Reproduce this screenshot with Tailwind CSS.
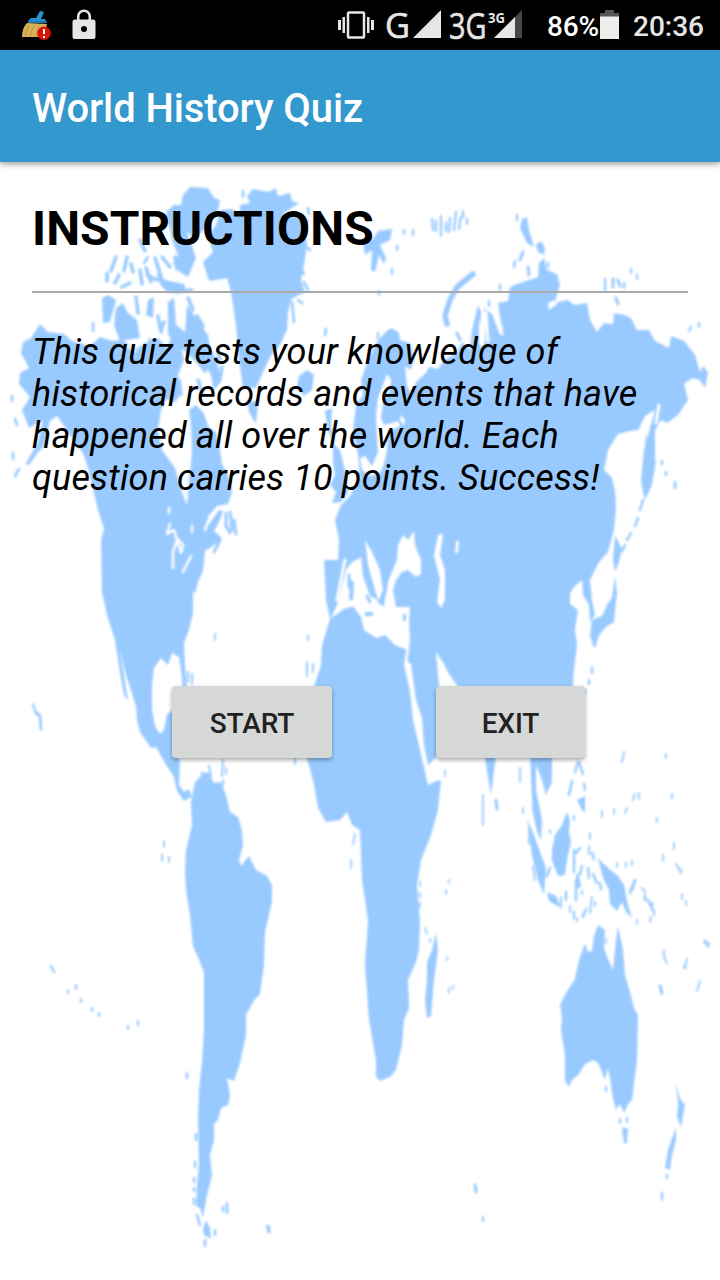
<!DOCTYPE html>
<html lang="en">
<head>
<meta charset="utf-8">
<title>World History Quiz</title>
<script src="https://cdn.jsdelivr.net/npm/@tailwindcss/browser@4"></script>
</head>
<body class="bg-white">
<div class="relative isolate flex h-[1280px] w-[720px] flex-col overflow-hidden font-['Roboto',sans-serif] text-black">
  <!-- world map backdrop -->
  <svg class="absolute inset-0 -z-10 blur-[0.9px]" width="720" height="1280" viewBox="0 0 720 1280" fill="#99caff" stroke-linecap="round" stroke-linejoin="round">
    <!-- North and Central America -->
    <path d="M40 324L48 332L64 334L72 341L90 346L100 337L112 341L122 340L136 349L145 343L158 338L167 348L172 335L180 342L184 360L178 375L180 395L175 402L166 399L161 410L158 430L162 450L175 468L183 495L187 505L189 480L192 455L191 425L189 410L196 405L203 412L209 428L216 432L220 450L222 464L228 475L232 492L228 504L217 506L211 513L206 527L212 520L219 510L223 511L219 522L214 531L222 538L213 546L205 551L203 571L198 582L195 594L193 590L193 613L189 630L184 643L185 665L187 690L183 690L181 669L179 657L172 653L168 665L161 658L154 668L152 685L152 710L155 726L160 734L164 730L167 714L173 710L176 750L180 762L179 785L184 792L189 789L192 797L189 798L184 801L177 791L174 777L165 763L156 747L151 748L140 732L137 721L136 706L126 675L119 648L124 675L128 701L124 695L119 667L115 640L107 615L102 592L101 540L104 529L98 510L92 485L88 468L83 453L76 445L67 430L57 416L50 421L44 445L33 459L25 465L38 442L43 420L29 428L22 410L30 397L19 384L20 373L29 368L21 353L23 342L31 338Z"/>
    <!-- Arctic archipelago -->
    <path d="M183 195L190 187L208 188L214 198L220 200L218 210L210 217L204 230L194 238L180 226L166 212L174 205L181 205Z"/>
    <path d="M166 210L181 217L190 240L196 258L188 277L180 272L173 263L178 255L172 240Z"/>
    <path d="M156 272L165 280L184 284L187 292L168 293L160 284Z"/>
    <path d="M102 298L108 295L116 300L110 322L103 323Z"/>
    <path d="M116 308L123 303L128 313L137 320L140 338L120 341L114 325Z"/>
    <path d="M148 300L154 297L153 318L146 315Z"/>
    <path d="M168 302L174 298L176 325L185 332L187 305L196 318L208 335L210 352L204 372L194 360L181 348L168 335Z"/>
    <path d="M200 358L212 350L218 365L221 382L214 390L211 375Z"/>
    <path d="M247 400L258 402L256 424L249 412Z"/>
    <path fill="none" stroke="#99caff" stroke-width="3.5" d="M140 240l5 11M127 257l-3 14M116 257l-5 14M107 273v8M119 275l-4 8M122 287l8-4M131 264l2 8M140 270l2 14M146 268l5 14M155 258l6 18M162 257l8 10M175 257l2 12M192 290l-16 2M136 297l2 16M158 316l3 16M188 298l5 12M197 316l6 10M205 355v16M222 367l-2 12M198 380l4 12M218 352l2 8M179 380l2 14M150 340l4 5M164 322l-3 9M147 275l10 5"/>
    <path fill="none" stroke="#99caff" stroke-width="2.6" d="M93 323v8M148 257l-4 6M12 396v5M15 419l2 6M28 464l6-8M15 476l4-7M41 448l5-14M13 453v6"/>
    <!-- Greenland -->
    <path d="M250 203L247 196L253 189L268 192L276 188L278 196L290 193L292 201L299 203L290 209L282 214L300 216L309 220L305 230L307 245L303 270L301 280L305 292L291 299L288 312L287 330L280 345L270 357L264 370L256 388L243 388L239 360L236 325L231 292L227 278L209 281L203 262L213 252L208 236L216 225L221 210L232 209L240 214L240 205Z"/>
    <path fill="none" stroke="#99caff" stroke-width="2.6" d="M243 191v6M308 208l1 6M304 245l6 5M301 268l3 6M304 282l4 8M292 302l2 20M298 300l4 3M326 329l-1 6M234 265l-27 3"/>
    <path d="M299 376L307 370L314 375L312 390L304 396L297 388Z"/>
    <path fill="none" stroke="#99caff" stroke-width="3" d="M205 540l9-12M214 552l6-12M226 525l4 8M230 512l2 18M226 513v14M234 520l2 14"/>
    <g fill="none" stroke="#fff" stroke-width="2.5">
      <path d="M170 524L167 534L174 530L177 540L173 552V568M177 540L181 553L183 545L177 538M183 572L191 556M192 526v6M169 508v5M219 507l-9 9-5 14M127 346l8 5"/>
    </g>
    <!-- Caribbean and Atlantic -->
    <path fill="none" stroke="#99caff" stroke-width="2" d="M188 672v10M192 674v10M215 634v6M202 772v18M209 766l2 10M223 760l-1 16M226 768v6M223 780v5M307 662v14M313 664v8M33 704l3 10M308 636v4M164 841v6M162 855v6M169 857v5M295 758v6"/>
    <path fill="none" stroke="#99caff" stroke-width="2.8" d="M36 712l4 4 1 13"/>
    <!-- South America -->
    <path d="M192 797L195 782L204 773L208 772L214 783L221 782L226 795L230 812L238 817L242 830L243 846L239 860L241 866L249 856L256 870L267 876L272 885L272 902L265 932L264 965L260 994L255 999L246 1015L246 1035L240 1063L234 1081L227 1078L230 1095L228 1105L221 1108L218 1120L214 1124L214 1140L210 1155L212 1175L206 1200L203 1218L200 1208L196 1206L197 1185L199 1164L198 1120L199 1090L202 1062L204 1030L204 973L200 962L193 946L190 915L186 890L185 872L186 850L192 825L191 802Z"/>
    <path d="M206 1220L210 1228L211 1239L204 1235L203 1229ZM266 1224L270 1226L271 1234L267 1232Z"/>
    <path fill="none" stroke="#99caff" stroke-width="2.5" d="M196 1134v6M195 1162v5M194 1178v4M194 1188v3M194 1199v5M197 1215l3 10M205 1240v6M215 1230v5M223 1207v4M227 1203v10M187 1073v5"/>
    <path fill="none" stroke="#8fc4ff" stroke-width="2" d="M51 966l3 6M68 990v3M76 985v4M81 999v3M92 1008v3M99 1013v3M128 1026v3M138 1021v4"/>
    <!-- Europe and Asia -->
    <path d="M368 360L378 340L388 330L392 328L399 333L400 340L410 343L414 358L410 372L407 388L416 378L422 372L430 367L438 369L444 360L457 353L462 342L470 350L472 330L478 305L481 312L480 345L484 348L486 325L484 308L492 314L500 335L503 330L500 317L498 303L508 301L510 287L520 283L538 277L539 263L544 258L547 270L557 274L560 285L555 302L549 310L558 302L568 300L574 305L587 303L590 320L597 332L604 323L613 324L614 313L625 315L631 318L637 330L649 330L655 341L669 348L671 336L684 341L695 355L700 372L703 366L708 372L705 388L700 380L692 378L684 384L688 400L678 415L667 423L661 420L655 430L655 460L650 480L644 498L641 480L644 450L655 410L645 416L638 430L630 431L618 434L608 450L604 470L612 478L617 500L614 530L608 552L599 562L590 580L592 600L595 615L590 622L589 605L583 595L582 580L575 586L570 593L570 604L578 610L575 630L577 645L574 670L572 700L555 715L552 758L552 782L546 795L542 780L536 765L536 790L542 820L541 840L536 822L532 800L530 750L520 715L505 708L496 755L491 795L486 765L478 710L466 700L456 684L449 674L444 664L436 652L440 690L447 700L438 755L426 768L423 755L412 700L407 665L410 640L409 622L393 638L383 620L380 606L366 607L362 622L352 603L345 608L330 619L326 600L324 560L338 560L339 540L335 520L341 505L350 496L360 478L358 455L353 430L356 405L363 395L361 380Z"/>
    <!-- Africa -->
    <path d="M330 619L345 608L362 605L365 625L379 638L382 630L407 645L404 665L412 700L420 745L428 782L441 780L438 810L431 835L421 860L417 885L420 920L419 950L416 962L408 980L409 1008L404 1020L402 1045L396 1070L390 1077L380 1081L376 1077L376 1060L369 1020L365 965L368 920L362 880L360 830L352 825L347 812L340 820L326 822L318 808L314 784L307 758L313 690L321 665L322 645Z"/>
    <path d="M436 933L438 950L434 980L431 1016L427 1018L425 1000L427 980L427 962L432 950Z"/>
    <!-- British Isles and Novaya Zemlya -->
    <path d="M333 443L340 450L345 470L348 492L341 502L332 503L336 492L330 485L335 475L333 462ZM325 411L332 408L331 425L334 446L328 430Z"/>
    <path fill="none" stroke="#99caff" stroke-width="5.5" d="M473 274L457 287L450 300L445 315L447 324"/>
    <!-- inland seas and straits -->
    <g fill="#fff">
      <path d="M387 374L391 380L390 390L383 402L381 418L384 425L398 421L400 426L388 432L387 450L384 464L380 473L370 476L362 470L360 458L365 456L372 466L378 452L377 438L376 415L378 398Z"/>
      <path d="M405 366L413 372L420 366L428 366L427 372L416 382L411 394L407 386ZM401 415L405 420L404 426L400 420Z"/>
      <path d="M397 560L398 545L403 535L408 540L414 531L415 545L421 560L421 574L416 577L408 570L402 572L396 580L393 590L396 607L410 607L409 623L408 650L395 645L385 635L376 638L364 630L361 617L353 606L344 609L331 618L337 605L341 590L346 570L352 562L362 557L369 570L376 590L377 602L384 607L386 590L389 579Z"/>
      <path d="M365 540L372 552L380 570L383 590L378 602L375 588L368 565Z"/>
      <path d="M438 535L443 534L440 555L445 570L445 600L441 608L437 602L440 580L434 556Z"/>
      <path d="M406 660L411 664L416 700L422 718L424 745L428 765L445 752L438 780L428 785L420 750L413 720L410 690Z"/>
      <path d="M436 651L441 665L449 675L455 686L445 688L439 685ZM456 542L459 540L458 553L455 553Z"/>
      <path d="M548 303L554 300L557 304L549 310ZM479 320l4 8v22l-4-8Z"/>
    </g>
    <path fill="#99caff" d="M360 545L369 570L378 600L370 596L363 576ZM350 580L354 582L353 600L349 600ZM365 612h8v4h-8ZM403 614h3v7h-3Z"/>
    <path fill="none" stroke="#99caff" stroke-width="3" d="M367 596l3 6M349 575v12M386 588l-3 12"/>
    <path fill="none" stroke="#fff" stroke-width="3" d="M486 312l2 30M497 320l5 14M659 405l-3 18M616 470l2 55M345 560l-8 40"/>
    <!-- Arctic islands of Eurasia -->
    <path d="M363 243L373 239L378 231L392 229L390 240L380 245L386 258L384 264L379 255L375 272L371 270L372 250L365 255ZM520 228L522 219L527 217L529 230L534 247L527 243ZM536 245L541 241L545 248L544 255L538 252Z"/>
    <path fill="none" stroke="#99caff" stroke-width="2.3" d="M404 230v4M413 230v5M397 246v4M392 269v5M432 219l1 11M436 221v10M441 216v20M446 223v8M450 218l-1 14M456 212l-2 18M461 217l-2 12M463 211v6M467 219v5M517 215v5M515 261l-1 6M548 263v4M605 279v12M624 283v5M631 269v4M637 275v4M691 327l-2 4M699 323v4M379 291v4M500 285v5M489 301v5M378 333v5"/>
    <path fill="none" stroke="#99caff" stroke-width="3" d="M523 252l-3 8M528 267l1 8M613 279v8M618 280l2 6M616 298l2 6M457 333l3 7"/>
    <!-- Japan and Sakhalin -->
    <path d="M646 432L648 455L656 460L652 485L645 500L643 475ZM615 535L622 549L619 562L615 572L613 560ZM615 576L617 592L614 622L606 627L600 634L594 648L590 636L592 620L602 616L608 603L612 598Z"/>
    <path fill="none" stroke="#99caff" stroke-width="2.5" d="M643 500l-3 10M638 518l-3 8M631 533l-4 7M625 545l-3 6M662 461v3M666 472v3M675 482v6M595 640v6M592 668v5M589 680v4M585 690l-1 4"/>
    <!-- South-east Asia and the Pacific -->
    <path d="M555 835L562 825L567 812L570 820L569 832L571 842L567 860L565 875L558 876L552 860L552 850ZM527 819L534 835L540 852L546 868L545 880L544 895L538 880L532 855ZM534 790L541 832L541 840L537 832L532 808ZM547 892L556 896L561 908L549 901ZM577 800L585 796L585 812L582 810ZM598 858L607 867L618 876L624 885L628 905L632 918L626 912L622 902L617 911L610 904L609 890L603 878Z"/>
    <path d="M581 918L584 910L588 906L584 918ZM630 890L634 879L637 879L633 891Z"/>
    <path fill="none" stroke="#99caff" stroke-width="2.5" d="M574 850v22M580 848l-4 5M582 866l-2 8M588 868l1 10M578 875v12M576 880v20M550 868l-3 8M566 892v8M574 912v6M577 876l3 10M592 853l2 6M593 874l4 9M600 883l1 6M632 887l-2 6M645 895v5M648 900l2 5M652 903v7M569 795l3-14M575 772l3-10M579 762l4 12M584 784l1 6"/>
    <path fill="none" stroke="#a6d1ff" stroke-width="2.2" d="M483 795v30M520 768v14M523 808v5M529 830v14M533 866l2 14M550 830v3M574 816v4M590 833v6M589 846v8M561 897v10M570 906v6M577 918v3M582 891v3M592 897l-2 16M595 902v4M617 863v4M626 863v4M632 861v4M602 811v6M614 809v5M625 813l2-5M633 800l2-6M639 793v6M622 762l2-10M666 754v4M672 794v5M657 818v4M663 855v6M674 843v6M676 864l4 7M681 869v4M642 888l3 4M654 910v5M650 922l1-5M637 920v4M682 894v5M686 901v4M664 950v7l3 6M687 959l-1 4M700 981l-3 10M606 939v4"/>
    <path fill="none" stroke="#99caff" stroke-width="3" d="M496 800l1 9M660 986l2 7M685 965v3M708 943v3M705 941v2"/>
    <path fill="none" stroke="#a6d1ff" stroke-width="2" d="M449 880v3M446 890v4M420 882v4M420 893v4M420 903v4M425 928l2 6M430 939v3M447 957v3M449 988v5M453 986v3M445 770v6M355 834l-2 10M351 860v8"/>
    <!-- Australia and New Zealand -->
    <path d="M598 925L605 930L604 947L607 957L613 970L616 940L618 926L623 950L625 975L630 992L634 1008L638 1015L637 1060L632 1100L628 1104L624 1113L620 1104L616 1110L612 1094L610 1078L608 1068L605 1080L602 1072L598 1063L593 1060L585 1064L579 1074L572 1080L569 1087L565 1080L565 1055L561 1030L562 1018L560 1005L566 993L575 979L579 960L585 943L588 952L592 951L594 936Z"/>
    <path d="M622 1128L628 1128L627 1143L624 1144ZM676 1083L680 1099L685 1105L683 1115L681 1127L677 1117L678 1103ZM676 1127L676 1140L672 1155L670 1170L665 1168L668 1150Z"/>
    <path fill="none" stroke="#99caff" stroke-width="2.3" d="M606 1087v4M620 1119v4M627 1118v4M667 1175v3M662 1193v7M483 1217v4"/>
    <path fill="none" stroke="#99caff" stroke-width="3" d="M475 1185l1 7"/>
  </svg>

  <!-- status bar -->
  <div class="flex h-[50px] shrink-0 items-center bg-black">
    <svg width="720" height="50" viewBox="0 0 720 50" fill="#e6e6e6">
      <path d="M27 23L47 24Q45 30 47 37H22Q22 28 27 23" fill="#d9b057"/>
      <path d="M29 26l-4 10M34 25l-4 11M39 25l-3 11M43 26l-1 9" stroke="#b98f42" stroke-width=".8" fill="none"/>
      <path d="M28 21L31 18H36L40 11L44 12L41 19H45L47 23H28Z" fill="#2590d4"/>
      <path d="M28 22H47" stroke="#14629c"/>
      <circle cx="44" cy="33.300" r="6.800" fill="#d81405"/>
      <path d="M43 29h2v5h-2zM43 36h2v2h-2z" fill="#fff"/>
      <path fill-rule="evenodd" d="M75 19.500H77V16.500a7 7 0 0 1 14 0V19.500H93a2.500 2.500 0 0 1 2.500 2.500V36.500A2.500 2.500 0 0 1 93 39H75a2.500 2.500 0 0 1-2.500-2.500V22A2.500 2.500 0 0 1 75 19.500M79.500 19.500H88.500V16.500a4.500 4.500 0 0 0-9 0ZM84 26a3 3 0 1 0 0 6a3 3 0 0 0 0-6"/>
      <path d="M338 20h3v10h-3zM342.500 17h2.500v16h-2.500zM367 17h2.500v16h-2.500zM371 20h3v10h-3z"/>
      <rect x="348" y="12.500" width="16" height="25" rx="1" fill="none" stroke="#e6e6e6" stroke-width="2.500"/>
      <path d="M413 38L441 10V38Z"/>
      <path d="M494 38L522 10V38Z" fill="#484848"/><path d="M494 38L515 17V38Z"/>
      <g font-family="Open Sans, sans-serif" stroke="#e6e6e6">
        <text x="385" y="37.500" font-size="35" stroke-width=".6" textLength="25" lengthAdjust="spacingAndGlyphs">G</text>
        <text x="449" y="39" font-size="36" stroke-width=".6" textLength="37.500" lengthAdjust="spacingAndGlyphs">3G</text>
        <text x="488" y="22.500" font-size="15" stroke-width="0" font-weight="700" textLength="17" lengthAdjust="spacingAndGlyphs">3G</text>
      </g>
      <path d="M605 10h9v3h5v4h-19v-4h5z" fill="#555"/><path d="M600 16.500h19V39h-19z" fill="#eee"/>
      <g font-family="Roboto, sans-serif" font-weight="500">
        <text x="547" y="36" font-size="28" fill="#fff" textLength="52">86%</text>
        <text x="633" y="36" font-size="28" textLength="71">20:36</text>
      </g>
    </svg>
  </div>

  <header class="flex h-28 shrink-0 items-center bg-[#3398ce] px-8 pt-1.5 shadow-[0_2px_6px_rgba(0,0,0,0.4)]">
    <h1 class="text-[40px] font-medium leading-none tracking-[-0.11px] text-white">World History Quiz</h1>
  </header>

  <main class="flex flex-col px-8 pt-[39px]">
    <h2 class="text-[48px] font-bold leading-[56px] tracking-[0.1px]">INSTRUCTIONS</h2>
    <hr class="mt-[34px] border-0 border-t-2 border-[#aaaaaa]">
    <p class="mt-[38px] w-[650px] text-[36px] italic leading-[42px] tracking-[0.17px]">This quiz tests your knowledge of<br>historical records and events that have<br>happened all over the world. Each<br>question carries 10 points. Success!</p>
    <div class="mt-[187px] flex gap-[104px] pl-[140px] text-[28px] font-medium tracking-[-0.1px] text-[#212121]">
      <button class="h-[72px] w-40 rounded bg-[#d6d8d7] pt-1 shadow-[0_2px_4px_rgba(0,0,0,0.35)]">START</button>
      <button class="h-[72px] w-[149px] rounded bg-[#d6d8d7] pt-1 shadow-[0_2px_4px_rgba(0,0,0,0.35)]">EXIT</button>
    </div>
  </main>
</div>
</body>
</html>
